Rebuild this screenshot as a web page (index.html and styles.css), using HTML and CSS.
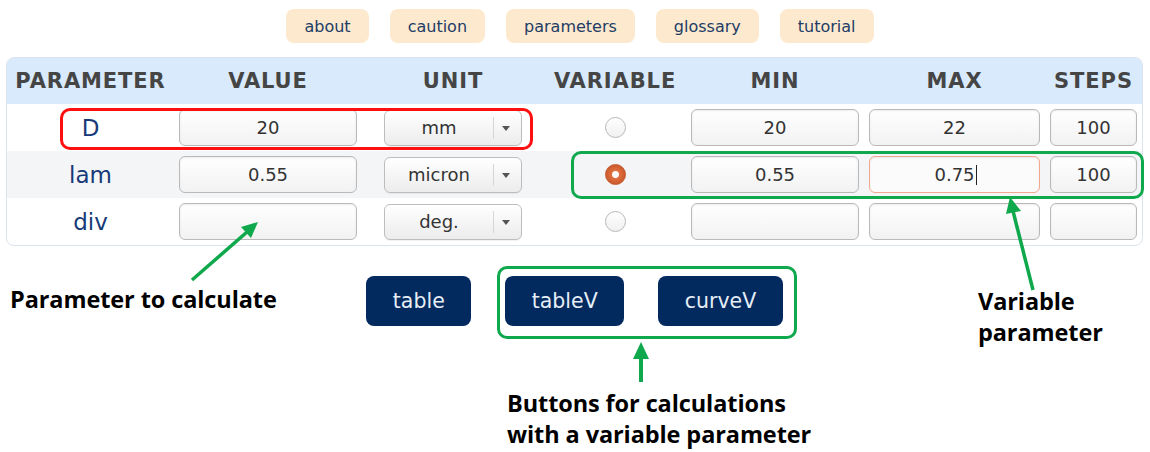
FILE: index.html
```html
<!DOCTYPE html>
<html lang="en">
<head>
  <meta charset="UTF-8">
  <title>Beam divergence calculator</title>
  <link rel="stylesheet" href="styles.css">
</head>
<body>

<div class="page">
  <nav class="topnav">
    <button class="navbtn">about</button>
    <button class="navbtn">caution</button>
    <button class="navbtn">parameters</button>
    <button class="navbtn">glossary</button>
    <button class="navbtn">tutorial</button>
  </nav>

  <div class="panel">
    <div class="row head">
      <div class="cell">PARAMETER</div>
      <div class="cell">VALUE</div>
      <div class="cell">UNIT</div>
      <div class="cell">VARIABLE</div>
      <div class="cell">MIN</div>
      <div class="cell">MAX</div>
      <div class="cell">STEPS</div>
    </div>

    <div class="row">
      <div class="cell name">D</div>
      <div class="cell"><input class="field" type="text" value="20"></div>
      <div class="cell">
        <span class="select"><select><option>mm</option></select></span>
      </div>
      <div class="cell"><input class="radio" type="radio" name="variable"></div>
      <div class="cell"><input class="field" type="text" value="20"></div>
      <div class="cell"><input class="field" type="text" value="22"></div>
      <div class="cell"><input class="field" type="text" value="100"></div>
    </div>

    <div class="row alt">
      <div class="cell name">lam</div>
      <div class="cell"><input class="field" type="text" value="0.55"></div>
      <div class="cell">
        <span class="select"><select><option>micron</option></select></span>
      </div>
      <div class="cell"><input class="radio" type="radio" name="variable" checked></div>
      <div class="cell"><input class="field" type="text" value="0.55"></div>
      <div class="cell"><span class="caretwrap"><input class="field focused" type="text" value="0.75"></span></div>
      <div class="cell"><input class="field" type="text" value="100"></div>
    </div>

    <div class="row">
      <div class="cell name">div</div>
      <div class="cell"><input class="field" type="text" value=""></div>
      <div class="cell">
        <span class="select"><select><option>deg.</option></select></span>
      </div>
      <div class="cell"><input class="radio" type="radio" name="variable"></div>
      <div class="cell"><input class="field" type="text" value=""></div>
      <div class="cell"><input class="field" type="text" value=""></div>
      <div class="cell"><input class="field" type="text" value=""></div>
    </div>
  </div>

  <div class="actions">
    <button class="calc">table</button>
    <button class="calc">tableV</button>
    <button class="calc">curveV</button>
  </div>

  <!-- annotations drawn over the screenshot -->
  <div class="box red-box"></div>
  <div class="box green-row"></div>
  <div class="box green-btns"></div>

  <svg class="arrows" width="1150" height="452" viewBox="0 0 1150 452">
    <line x1="192" y1="280" x2="247" y2="232" stroke="#0fa84c" stroke-width="3.5"/>
    <polygon points="258,222 251,238 241,227" fill="#0fa84c"/>
    <line x1="1033" y1="290" x2="1013" y2="211" stroke="#0fa84c" stroke-width="3.5"/>
    <polygon points="1010,197 1021,211 1006,214" fill="#0fa84c"/>
    <line x1="641" y1="382" x2="641" y2="356" stroke="#0fa84c" stroke-width="4"/>
    <polygon points="641,342 649,359 633,359" fill="#0fa84c"/>
  </svg>

  <div class="note note-calc">Parameter to calculate</div>
  <div class="note note-var">Variable<br>parameter</div>
  <div class="note note-btns">Buttons for calculations<br>with a variable parameter</div>
</div>

</body>
</html>
```

FILE: styles.css
```css
body {
  margin: 0;
  background-color: #ffffff;
  font-family: "DejaVu Sans", sans-serif;
}

.page {
  position: relative;
  width: 1150px;
  height: 452px;
  overflow: hidden;
}

.topnav {
  display: flex;
  justify-content: center;
  gap: 21px;
  padding: 9px 0 0 10px;
}

.navbtn {
  height: 34px;
  padding: 0 18px;
  border: none;
  border-radius: 8px;
  background-color: #fde9cd;
  color: #223c66;
  font-family: "DejaVu Sans", sans-serif;
  font-size: 16px;
}

.panel {
  margin: 14px 0 0 6px;
  width: 1135px;
  border: 1px solid #dbe3ec;
  border-radius: 8px;
  overflow: hidden;
}

.row {
  display: grid;
  grid-template-columns: 167px 188px 182px 142px 178px 181px 97px;
  height: 47px;
  align-items: center;
}

.row.head {
  height: 46px;
  background-color: #d8eafb;
  color: #454545;
  font-weight: bold;
  font-size: 21px;
  letter-spacing: 0.9px;
}

.row.alt {
  background-color: #f4f5f7;
}

.cell {
  display: flex;
  justify-content: center;
  align-items: center;
  padding: 0 5px;
}

.cell.name {
  color: #173a78;
  font-size: 23px;
}

.field {
  box-sizing: border-box;
  width: 100%;
  height: 37px;
  border: 1px solid #b9b9b9;
  border-radius: 6px;
  background: linear-gradient(#ffffff, #f2f2f2);
  box-shadow: inset 0 1px 2px rgba(0,0,0,0.08);
  color: #333333;
  font-family: "DejaVu Sans", sans-serif;
  font-size: 18px;
  text-align: center;
  outline: none;
}

.field.focused {
  border-color: #f2a88c;
  background: #fbfbfb;
}

.caretwrap {
  position: relative;
  width: 100%;
}

.caretwrap::after {
  content: "";
  position: absolute;
  left: calc(50% + 21px);
  top: 9px;
  width: 1px;
  height: 20px;
  background-color: #222;
}

.select {
  position: relative;
  display: inline-block;
}

.select select {
  appearance: none;
  box-sizing: border-box;
  width: 138px;
  height: 36px;
  padding: 0 28px 0 0;
  border: 1px solid #bdbdbd;
  border-radius: 6px;
  background: linear-gradient(#ffffff, #ececec);
  box-shadow: 0 1px 1px rgba(0,0,0,0.06);
  color: #333333;
  font-family: "DejaVu Sans", sans-serif;
  font-size: 18px;
  text-align: center;
  text-align-last: center;
}

.select::before {
  content: "";
  position: absolute;
  right: 28px;
  top: 7px;
  width: 1px;
  height: 22px;
  background-color: #d6d6d6;
}

.select::after {
  content: "";
  position: absolute;
  right: 12px;
  top: 16px;
  border-left: 4px solid transparent;
  border-right: 4px solid transparent;
  border-top: 5px solid #555;
}

.radio {
  appearance: none;
  width: 21px;
  height: 21px;
  margin: 0;
  border: 1px solid #b8b8b8;
  border-radius: 50%;
  background: linear-gradient(#ffffff, #f0f0f0);
}

.radio:checked {
  border-color: #c4572b;
  background: radial-gradient(circle, #ffffff 0 3px, #e2703f 4px, #c8582b 10px);
}

.actions {
  display: flex;
  justify-content: center;
  gap: 34px;
  margin: 30px 0 0 0;
  padding-right: 1px;
}

.calc {
  height: 50px;
  padding: 0 26.5px;
  border: none;
  border-radius: 8px;
  background-color: #022a5e;
  color: #e6eef7;
  font-family: "DejaVu Sans", sans-serif;
  font-size: 20.5px;
}

.box {
  position: absolute;
  border: 3px solid #0fa84c;
  border-radius: 10px;
}

.red-box {
  left: 60px;
  top: 108px;
  width: 467px;
  height: 36px;
  border-color: #ff1010;
}

.green-row {
  left: 571px;
  top: 151px;
  width: 567px;
  height: 42px;
}

.green-btns {
  left: 497px;
  top: 266px;
  width: 294px;
  height: 67px;
}

.arrows {
  position: absolute;
  left: 0;
  top: 0;
}

.note {
  position: absolute;
  color: #000000;
  font-family: "Open Sans", "Liberation Sans", sans-serif;
  font-weight: bold;
  font-size: 23.5px;
  line-height: 31px;
  letter-spacing: -0.1px;
}

.note-calc {
  left: 10px;
  top: 284px;
}

.note-var {
  left: 978px;
  top: 286px;
}

.note-btns {
  left: 507px;
  top: 388px;
}
```
